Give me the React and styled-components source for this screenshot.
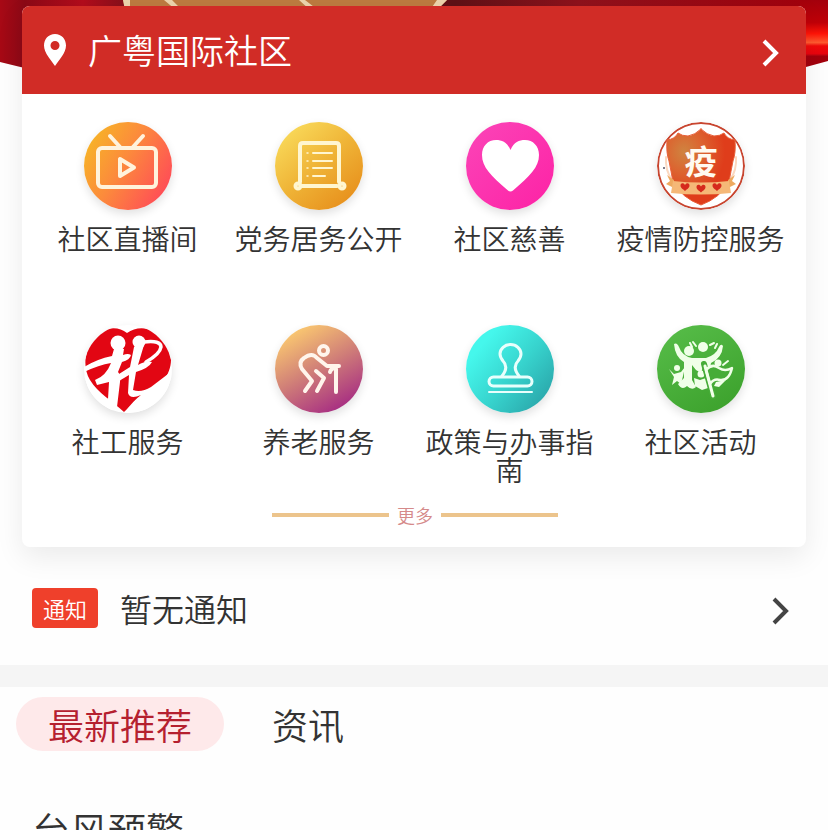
import React from "react";
import styled, { createGlobalStyle } from "styled-components";

const GlobalStyle = createGlobalStyle`
  * { box-sizing: border-box; }
  body {
    margin: 0;
    background: #fefefe;
    color: #333;
    font-family: "Noto Sans CJK SC", sans-serif;
    font-weight: 350;
  }
  button {
    font: inherit;
    color: inherit;
    border: 0;
    padding: 0;
    background: none;
    cursor: pointer;
  }
  a { color: inherit; text-decoration: none; }
`;

const Page = styled.main`
  position: relative;
  min-height: 100vh;
  overflow: hidden;
`;

const Banner = styled.svg`
  position: absolute;
  top: 0;
  left: 0;
  width: 100%;
  height: 96px;
`;

const Card = styled.section`
  position: relative;
  margin: 6px 22px 0;
  border-radius: 8px;
  background: #fff;
  overflow: hidden;
  box-shadow: 0 10px 28px rgba(0, 0, 0, 0.08);
`;

const CommunityBar = styled.button`
  display: flex;
  align-items: center;
  width: 100%;
  height: 88px;
  padding: 0 26px 0 20px;
  background: #d12c26;
  color: #fff;
  font-size: 34px;
  line-height: 48px;
  text-align: left;
`;

const CommunityName = styled.span`
  flex: 1;
  margin-left: 20px;
`;

const Arrow = styled.svg`
  margin-top: 6px;
`;

const ServiceGrid = styled.nav`
  display: grid;
  grid-template-columns: repeat(4, 1fr);
  row-gap: 72px;
  padding: 28px 10px 0;
`;

const Service = styled.a`
  display: flex;
  flex-direction: column;
  align-items: center;
  gap: 14px;
  padding: 0 8px;
  font-size: 28px;
  line-height: 28px;
  text-align: center;
  min-height: 131px;
`;

const Round = styled.span`
  display: block;
  width: 88px;
  height: 88px;
  border-radius: 50%;
  overflow: hidden;
  background: ${(p) => p.$fill};
  box-shadow: 0 4px 10px rgba(0, 0, 0, 0.12);
  svg { display: block; }
`;

const More = styled.button`
  display: flex;
  align-items: center;
  justify-content: center;
  gap: 8px;
  width: 100%;
  height: 64px;
  padding-left: 2px;
  color: #d58a8a;
  font-size: 18px;
  line-height: 28px;
  &::before,
  &::after {
    content: "";
    width: 117px;
    height: 4px;
    background: #ecc48c;
  }
`;

const Notice = styled.a`
  display: flex;
  align-items: center;
  height: 118px;
  padding: 4px 38px 0 32px;
  font-size: 32px;
  line-height: 48px;
`;

const Badge = styled.span`
  width: 66px;
  border-radius: 4px;
  background: #ef402b;
  color: #fff;
  font-size: 22px;
  line-height: 40px;
  text-align: center;
`;

const NoticeText = styled.span`
  flex: 1;
  margin-left: 22px;
`;

const Divider = styled.hr`
  height: 22px;
  margin: 0;
  border: 0;
  background: #f5f5f5;
`;

const Tabs = styled.div`
  display: flex;
  gap: 16px;
  padding: 10px 16px 0;
`;

const Tab = styled.button`
  padding: 0 32px;
  border-radius: 27px;
  font-size: 36px;
  line-height: 54px;
  background: ${(p) => (p.$active ? "#fee9ea" : "transparent")};
  color: ${(p) => (p.$active ? "#b5202f" : "#333")};
`;

const Headline = styled.h2`
  margin: 50px 32px 0;
  font-size: 38px;
  line-height: 56px;
  font-weight: inherit;
`;

const BannerArt = () => (
  <Banner viewBox="0 0 828 96" preserveAspectRatio="none" aria-hidden="true">
    <defs>
      <linearGradient id="sky" x1="0" x2="1" y1="0" y2="0">
        <stop offset="0" stopColor="#a80915" />
        <stop offset="0.03" stopColor="#8b0916" />
        <stop offset="0.1" stopColor="#b30c1c" />
        <stop offset="0.15" stopColor="#86101a" />
        <stop offset="0.55" stopColor="#5f1116" />
        <stop offset="0.7" stopColor="#8f121c" />
        <stop offset="1" stopColor="#a3000c" />
      </linearGradient>
      <linearGradient id="glow" x1="0" x2="0" y1="0" y2="1">
        <stop offset="0" stopColor="#a3000c" />
        <stop offset="0.400" stopColor="#c00008" />
        <stop offset="0.600" stopColor="#ff1408" />
        <stop offset="0.760" stopColor="#ff5a30" />
        <stop offset="0.820" stopColor="#f00a0a" />
        <stop offset="0.960" stopColor="#e8040e" />
        <stop offset="1" stopColor="#a80410" />
      </linearGradient>
    </defs>
    <path d="M0 0H828V61Q800 69 770 76H60Q28 69 0 62Z" fill="url(#sky)" />
    <path d="M800 0H828V56H800Z" fill="url(#glow)" />
    <path d="M123 0H447L437 10H125Z" fill="#bd7b40" />
    <path d="M123 0H130V10H125ZM164 0H172L182 10H176ZM299 0H305L318 10H310ZM437 0H447L437 10H430Z" fill="#ecd4ac" />
  </Banner>
);

const Chevron = ({ color }) => (
  <Arrow width="18" height="30" viewBox="0 0 18 30" fill="none" stroke={color} strokeWidth="4" aria-hidden="true">
    <path d="M2 3L14 15L2 27" />
  </Arrow>
);

const Pin = () => (
  <svg width="26" height="34" viewBox="0 0 26 34" aria-hidden="true">
    <path fill="#fff" fillRule="evenodd" d="M13 1C6.500 1 2 6 2 12.500C2 20 9 27 13 33C17 27 24 20 24 12.500C24 6 19.500 1 13 1ZM13 8A4.500 4.500 0 1 1 13 17A4.500 4.500 0 1 1 13 8Z" />
  </svg>
);

const Glyph = ({ children }) => (
  <svg width="88" height="88" viewBox="0 0 88 88" fill="none" stroke="#fff" strokeLinecap="round" strokeLinejoin="round" aria-hidden="true">
    {children}
  </svg>
);

const LiveIcon = () => (
  <Glyph>
    <g stroke="#fff3dc" strokeWidth="4">
      <rect x="14" y="26" width="58" height="39" rx="4" />
      <path d="M26 14L36 25M59 14L49 25" />
      <path d="M36 37V54L50 45.500Z" />
    </g>
  </Glyph>
);

const ScrollIcon = () => (
  <Glyph>
    <g stroke="#fff6d0">
      <path d="M25 60V24Q25 21 28 21H61Q64 21 64 24V60" strokeWidth="4" />
      <path d="M27 64H62" strokeWidth="4" />
      <path d="M38 31H57M38 39H57M38 46H57M38 54H50" strokeWidth="2" />
      <path d="M32 31H33M32 39H33M32 46H33M32 54H33" strokeWidth="1.500" />
      <circle cx="23" cy="64" r="2.500" strokeWidth="4" />
      <circle cx="67" cy="64" r="2.500" strokeWidth="4" />
    </g>
  </Glyph>
);

const HeartIcon = () => (
  <Glyph>
    <path fill="#fff" stroke="none" d="M44.500 28C41 20 36 18 30 18C22 18 16 24 16 33C16 45 25 54 42 68.500Q44.500 70.500 47 68.500C64 54 73 45 73 33C73 24 67 18 59 18C53 18 48 20 44.500 28Z" />
  </Glyph>
);

const smallHeart = "c-1.500-2.800-4.500-2-4.500.500c0 2.500 3 4 4.500 5.500c1.500-1.500 4.500-3 4.500-5.500c0-2.500-3-3.300-4.500-.500z";

const ShieldIcon = () => (
  <Glyph>
    <defs>
      <radialGradient id="shield" cx="0.250" cy="0.300" r="0.600">
        <stop offset="0" stopColor="#cf8440" />
        <stop offset="0.450" stopColor="#dc6430" />
        <stop offset="1" stopColor="#df3d1b" />
      </radialGradient>
    </defs>
    <circle cx="44" cy="44" r="43" stroke="#c8452f" strokeWidth="2" />
    <path d="M15 58Q8 48 9 35M73 58Q80 48 79 35" stroke="#fbd8c0" strokeWidth="2" />
    <path stroke="#e8603a" strokeWidth="1" fill="url(#shield)" d="M44 7Q38 13 31 14Q25 14 21 11Q18 17 10 18Q9 31 12 39Q14 49 16 60Q25 76 44 83Q63 76 72 60Q74 49 76 39Q79 31 78 18Q70 17 67 11Q63 14 57 14Q50 13 44 7Z" />
    <g stroke="none">
      <path fill="#eeaa60" d="M17 58L10 53L13 59L9 62L17 66ZM71 58L78 53L75 59L79 62L71 66Z" />
      <path fill="#f5b877" d="M16 59Q44 62 72 59L74 71Q44 74 14 71Z" />
      <path fill="#d6291c" d={"M28 63" + smallHeart + "M44 64.500" + smallHeart + "M60 63" + smallHeart} />
      <text x="44" y="52" textAnchor="middle" fill="#fffaf0" fontFamily="Noto Sans CJK SC, sans-serif" fontSize="33" fontWeight="700">疫</text>
    </g>
    <circle cx="7" cy="46" r="1" fill="#556" stroke="none" />
  </Glyph>
);

const SocialWorkIcon = () => (
  <Glyph>
    <path fill="#e20613" stroke="none" d="M43 8C34 1 20 1 10 14C1 24 -2 42 6 55C14 68 28 76 40 87C52 75 68 68 79 56C89 44 90 28 80 15C70 2 54 0 43 8Z" />
    <circle cx="34" cy="18" r="7.500" fill="#fff" stroke="none" />
    <circle cx="55" cy="17" r="6.500" fill="#fff" stroke="none" />
    <path fill="#fff" stroke="none" d="M0 42Q13 34 28 31L30 24H40L39 30Q44 28 47 30Q46 35 38 37L34 47Q37 50 36 57L33 82L26 88H0V50L8 60Q16 70 24 74L25 57L13 60L11 55Q22 51 27 38Q15 40 0 47Z" />
    <path fill="#fff" stroke="none" d="M50 22L60 20L54 40Q62 35 68 37Q65 43 52 47L49 65Q57 68 67 62L88 46V88H40Q50 75 57 70Q46 75 44 68L45 50L35 56L35 49L46 42Z" />
    <path d="M60 17Q77 15 77 22Q76 29 62 37" strokeWidth="3.500" />
  </Glyph>
);

const ElderIcon = () => (
  <Glyph>
    <g stroke="#fff5ec" strokeWidth="4">
      <circle cx="48.500" cy="25.500" r="4.500" />
      <path d="M30 66L37 56L27 44Q23 37 29 33Q37 27 42 33L52 41H64" />
      <path d="M41 46L49 53L42 66" />
      <path d="M61 67V44M55 47Q56 43 61 43" />
    </g>
  </Glyph>
);

const StampIcon = () => (
  <Glyph>
    <g stroke="#e8fffc" strokeWidth="3">
      <path d="M36 51Q43 42 37 36Q34 32 34 29A10.500 9.500 0 0 1 55 29Q55 32 52 36Q46 42 53 51" />
      <rect x="23" y="52" width="43" height="9" rx="4.500" />
      <path d="M23 67H66" strokeWidth="2" />
    </g>
  </Glyph>
);

const ActivityIcon = () => (
  <Glyph>
    <g fill="#f0ffe8" stroke="none">
      <path d="M17 19Q20 17 22 22Q25 31 35 33H49Q59 30 62 22Q64 18 66 21Q65 33 54 38L53 44L46 42L44 48L39 45L35 40V55L39 62Q35 66 30 61Q25 66 21 59L27 53L27 37Q18 32 17 19Z" />
      <circle cx="32" cy="26" r="5" />
      <circle cx="46" cy="22" r="5" />
      <circle cx="20" cy="43" r="3" />
      <circle cx="44" cy="49" r="3.500" />
      <circle cx="61" cy="38" r="3.500" />
      <path d="M12 44L17 49L24 47L28 42L26 51L24 59L20 56L15 60L17 52ZM37 53L43 55L49 53L51 63L45 65L38 61ZM59 57L69 55L62 62L57 61Z" />
    </g>
    <g stroke="#f0ffe8">
      <path d="M36 17L39 21M53 20L57 18M58 23L60 19M66 40L71 36M35 22L33 18" strokeWidth="2" />
      <path d="M47 39L56 71" stroke="#46ac38" strokeWidth="6" />
      <path d="M49 45Q55 38 62 43Q68 47 75 43Q72 56 63 55Q57 53 53 59Z" fill="#46ac38" strokeWidth="2.500" />
      <path d="M48 41L56 71" strokeWidth="3" />
    </g>
  </Glyph>
);

const services = [
  { name: "社区直播间", fill: "linear-gradient(120deg, #f6ba24 5%, #fc8a3c 45%, #ff4a58 90%)", Icon: LiveIcon },
  { name: "党务居务公开", fill: "linear-gradient(140deg, #f9da5a 10%, #efb336 50%, #e78f1c 90%)", Icon: ScrollIcon },
  { name: "社区慈善", fill: "linear-gradient(135deg, #fb45b8, #fd22a5)", Icon: HeartIcon },
  { name: "疫情防控服务", fill: "#fff", Icon: ShieldIcon },
  { name: "社工服务", fill: "#fff", Icon: SocialWorkIcon },
  { name: "养老服务", fill: "linear-gradient(150deg, #fccb70 10%, #cf7d78 50%, #a52a83 90%)", Icon: ElderIcon },
  { name: "政策与办事指南", fill: "linear-gradient(130deg, #45f7ec 20%, #37d3cd 55%, #2aa6aa 90%)", Icon: StampIcon },
  { name: "社区活动", fill: "linear-gradient(150deg, #58be4a, #3a9f2a)", Icon: ActivityIcon },
];

export default function App() {
  return (
    <Page>
      <GlobalStyle />
      <BannerArt />
      <Card>
        <CommunityBar type="button">
          <Pin />
          <CommunityName>广粤国际社区</CommunityName>
          <Chevron color="#fff" />
        </CommunityBar>
        <ServiceGrid aria-label="社区服务">
          {services.map(({ name, fill, Icon }) => (
            <Service key={name} href="#">
              <Round $fill={fill}>
                <Icon />
              </Round>
              {name}
            </Service>
          ))}
        </ServiceGrid>
        <More type="button">更多</More>
      </Card>
      <Notice href="#">
        <Badge>通知</Badge>
        <NoticeText>暂无通知</NoticeText>
        <Chevron color="#444" />
      </Notice>
      <Divider />
      <Tabs role="tablist">
        <Tab type="button" role="tab" aria-selected="true" $active>最新推荐</Tab>
        <Tab type="button" role="tab" aria-selected="false">资讯</Tab>
      </Tabs>
      <Headline>台风预警</Headline>
    </Page>
  );
}
